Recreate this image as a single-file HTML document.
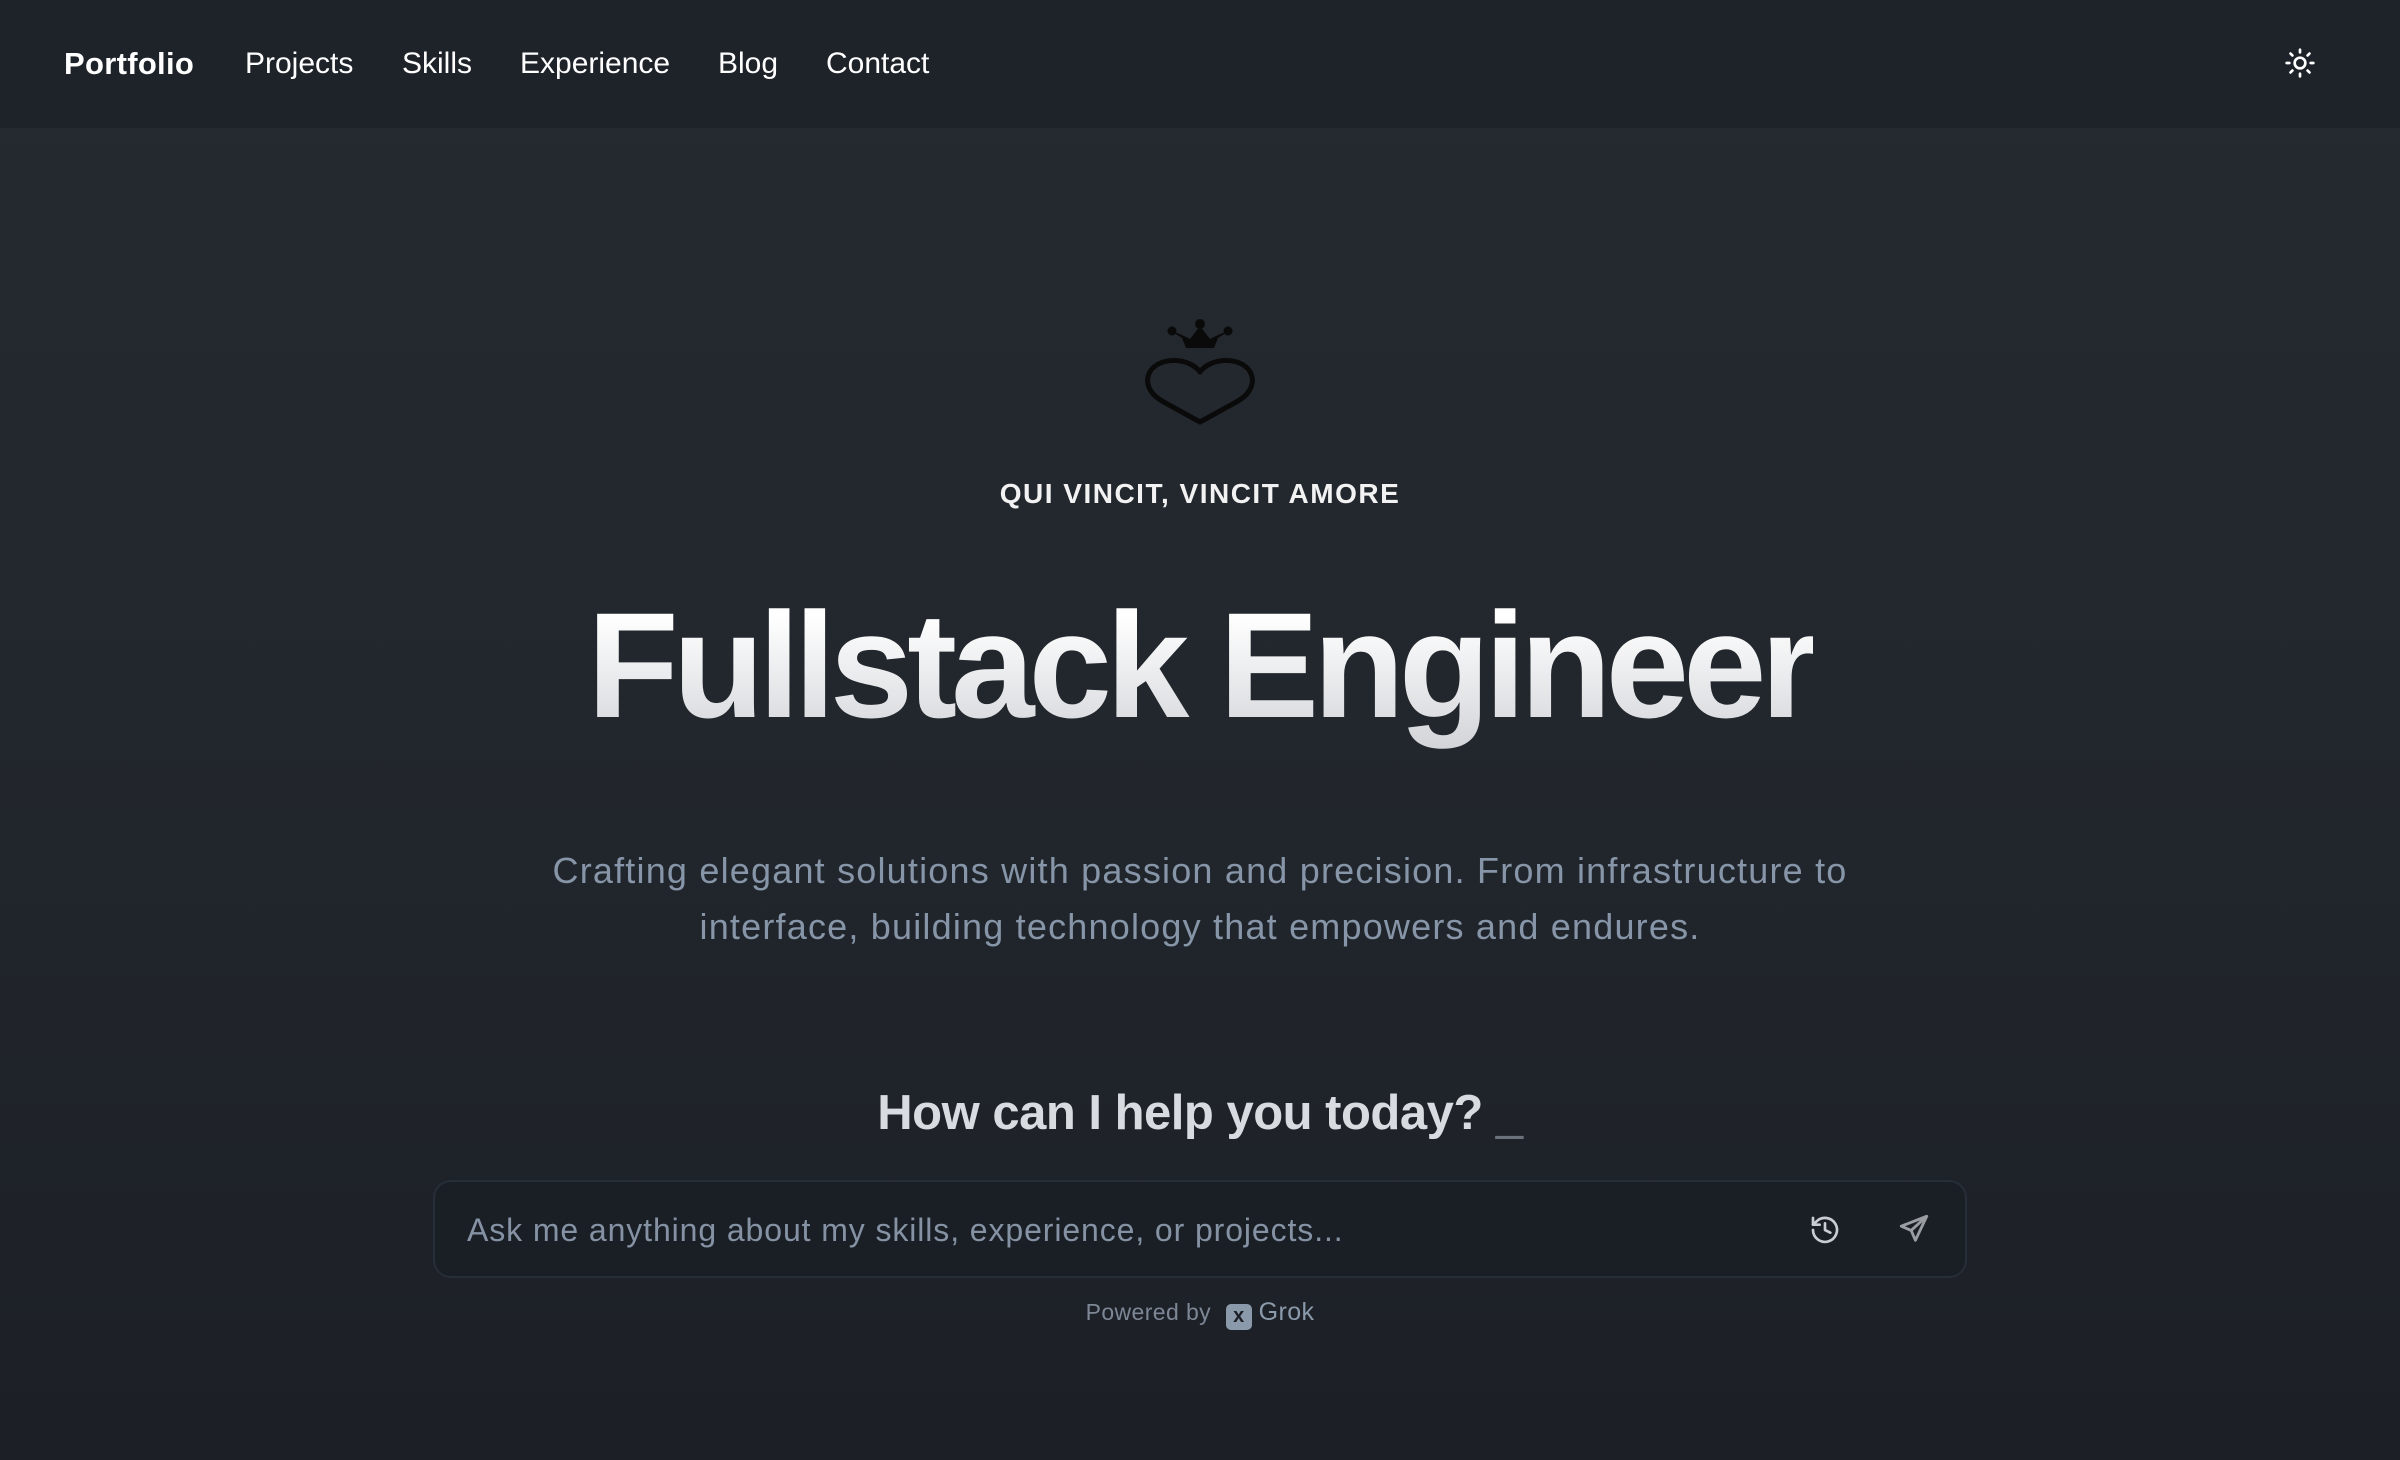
<!DOCTYPE html>
<html><head><meta charset="utf-8"><style>
*{margin:0;padding:0;box-sizing:border-box}
html,body{width:2400px;height:1460px;overflow:hidden}
body{background:linear-gradient(180deg,#242a30 0%,#22272d 50%,#1c2026 100%);font-family:"Liberation Sans",sans-serif;color:#fff;position:relative}
nav{position:absolute;left:0;top:0;width:2400px;height:128px;background:#1e2229}
nav span{position:absolute;top:47px;font-size:30px;color:#fff;letter-spacing:0px}
.c{position:absolute;left:0;width:2400px;text-align:center}
</style></head><body>
<nav>
<span style="left:64px;font-weight:bold;font-size:31px;letter-spacing:0.3px;top:46px">Portfolio</span>
<span style="left:245px">Projects</span>
<span style="left:402px">Skills</span>
<span style="left:520px">Experience</span>
<span style="left:718px">Blog</span>
<span style="left:826px">Contact</span>
<svg style="position:absolute;left:2284px;top:47px" width="32" height="32" viewBox="0 0 24 24" fill="none" stroke="#fff" stroke-width="2" stroke-linecap="round"><circle cx="12" cy="12" r="4"/><path d="M12 2v2M12 20v2M4.9 4.9l1.4 1.4M17.7 17.7l1.4 1.4M2 12h2M20 12h2M4.9 19.1l1.4-1.4M17.7 6.3l1.4-1.4"/></svg>
</nav>
<svg style="position:absolute;left:1140px;top:312px" width="120" height="116" viewBox="0 0 120 116">
<path d="M31 19 L42 26 L46 36 L74 36 L78 26 L89 19 L80 22 L70 27 L60 14 L50 27 L40 22 Z" fill="#0a0a0a"/>
<circle cx="60" cy="12" r="5" fill="#0a0a0a"/><circle cx="32" cy="19" r="4.5" fill="#0a0a0a"/><circle cx="88" cy="19" r="4.5" fill="#0a0a0a"/>
<path d="M60 60 C50 46 22 44 11 58 C3 70 10 82 22 89 L60 110 L98 89 C110 82 117 70 109 58 C98 44 70 46 60 60 Z" fill="none" stroke="#0a0a0a" stroke-width="5" stroke-linejoin="round"/>
</svg>
<div class="c" style="top:478px;font-size:28px;font-weight:bold;letter-spacing:1.5px;color:#f2f2f2">QUI VINCIT, VINCIT AMORE</div>
<div class="c" style="top:570px;font-size:150px;font-weight:bold;letter-spacing:-6px;line-height:190px"><span style="background:linear-gradient(180deg,#ffffff 20%,#d2d4d8 100%);-webkit-background-clip:text;background-clip:text;color:transparent">Fullstack Engineer</span></div>
<div class="c" style="top:843px;font-size:36px;line-height:56px;color:#8795a8;letter-spacing:1.2px"><div style="width:1400px;margin:0 auto">Crafting elegant solutions with passion and precision. From infrastructure to interface, building technology that empowers and endures.</div></div>
<div class="c" style="top:1085px;font-size:49px;font-weight:bold;color:#d8dbe0;letter-spacing:-0.5px">How can I help you today?<span style="color:#6b727c;font-weight:normal"> _</span></div>
<div style="position:absolute;left:433px;top:1180px;width:1534px;height:98px;background:#1a1f26;border:2px solid #262e38;border-radius:18px">
<div style="position:absolute;left:32px;top:30px;font-size:32px;color:#8592a4;letter-spacing:0.9px">Ask me anything about my skills, experience, or projects...</div>
<svg style="position:absolute;left:1374px;top:32px" width="32" height="32" viewBox="0 0 24 24" fill="none" stroke="#c9ccd1" stroke-width="2" stroke-linecap="round" stroke-linejoin="round"><path d="M3 12a9 9 0 1 0 2.6-6.4L3 8"/><path d="M3 3v5h5"/><path d="M12 7v5l4 2"/></svg>
<svg style="position:absolute;left:1462px;top:30px" width="34" height="34" viewBox="0 0 24 24" fill="none" stroke="#9a9da2" stroke-width="2" stroke-linejoin="round"><path d="M21 3 L3 10 L10 13 L13 20 Z"/><path d="M10 13 L21 3"/></svg>
</div>
<div class="c" style="top:1298px;font-size:23px;color:#7d8796;letter-spacing:0.4px">Powered by <span style="display:inline-block;width:26px;height:26px;background:#8b9aab;border-radius:5px;vertical-align:-2px;margin-left:8px;color:#1c2026;font-size:20px;font-weight:bold;line-height:24px;text-align:center">x</span> <span style="color:#8b9aab;font-size:25px">Grok</span></div>
</body></html>
